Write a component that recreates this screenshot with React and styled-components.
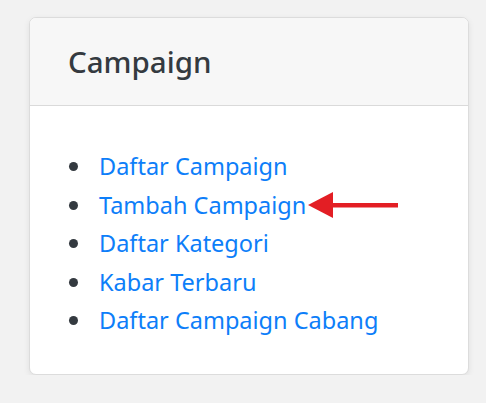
import React from 'react';
import styled, { createGlobalStyle } from 'styled-components';

const GlobalStyle = createGlobalStyle`
  html, body {
    margin: 0;
    padding: 0;
    background: #f2f2f2;
  }
  body {
    font-family: "Noto Sans", "Open Sans", sans-serif;
  }
`;

const Page = styled.div`
  padding: 17px 0 0 29px;
`;

const Card = styled.div`
  width: 440px;
  box-sizing: border-box;
  background: #fff;
  border: 1px solid #dcdcdc;
  border-radius: 7px;
  box-shadow: 0 2px 6px rgba(0, 0, 0, 0.08);
  overflow: hidden;
`;

const CardHeader = styled.div`
  height: 87px;
  display: flex;
  align-items: center;
  padding: 0 38px;
  background: #f7f7f7;
  border-bottom: 1px solid #dadada;
`;

const Title = styled.h4`
  margin: 0;
  font-size: 29.5px;
  font-weight: 500;
  color: #343a40;
`;

const CardBody = styled.div`
  padding: 41px 39px 34px;
`;

const List = styled.ul`
  margin: 0;
  padding: 0;
  list-style: none;
  font-size: 23.5px;
  line-height: 38.5px;
`;

const Item = styled.li`
  display: flex;
  align-items: center;

  &::before {
    content: '';
    flex: none;
    width: 9px;
    height: 9px;
    border-radius: 50%;
    background: #343a40;
    margin-right: 21px;
    margin-top: 1px;
  }
`;

const ItemLink = styled.a`
  color: #0d7ef9;
  text-decoration: none;
`;

const Arrow = styled.svg`
  display: block;
  flex: none;
  margin-left: 2px;
  margin-top: 1px;
`;

const items = [
  'Daftar Campaign',
  'Tambah Campaign',
  'Daftar Kategori',
  'Kabar Terbaru',
  'Daftar Campaign Cabang',
];

export default function App() {
  return (
    <Page>
      <GlobalStyle />
      <Card>
        <CardHeader>
          <Title>Campaign</Title>
        </CardHeader>
        <CardBody>
          <List>
            {items.map((label, i) => (
              <Item key={label}>
                <ItemLink href="#">{label}</ItemLink>
                {i === 1 && (
                  <Arrow width="90" height="26" viewBox="0 0 90 26">
                    <polygon points="0,13 25,0 25,26" fill="#e31e24" />
                    <rect x="24" y="11" width="66" height="4.5" fill="#e31e24" />
                  </Arrow>
                )}
              </Item>
            ))}
          </List>
        </CardBody>
      </Card>
    </Page>
  );
}
